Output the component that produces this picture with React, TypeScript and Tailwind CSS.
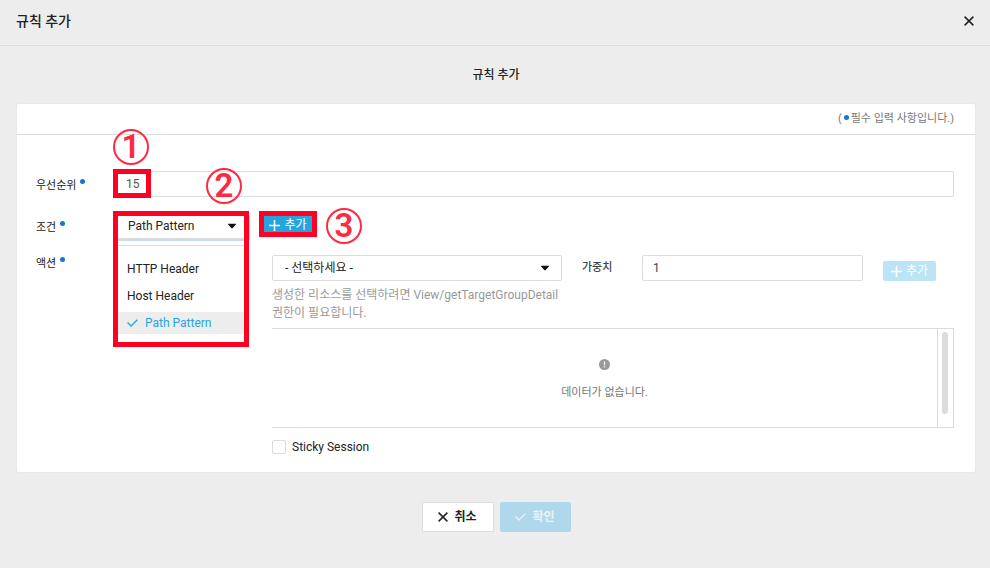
import { useState } from 'react'
import type { ReactNode } from 'react'
import clsx from 'clsx'

const conditions = ['HTTP Header', 'Host Header', 'Path Pattern']

const PlusIcon = () => (
  <svg className="size-[11px]" viewBox="0 0 11 11" fill="none" stroke="currentColor" strokeWidth="1.5" aria-hidden="true">
    <path d="M5.5 0V11M0 5.5H11" />
  </svg>
)

const CloseIcon = () => (
  <svg className="size-[10px]" viewBox="0 0 10 10" fill="none" stroke="currentColor" strokeWidth="1.5" aria-hidden="true">
    <path d="M0.6 0.6L9.4 9.4M9.4 0.6L0.6 9.4" />
  </svg>
)

const CheckIcon = () => (
  <svg className="w-[11px] h-2" viewBox="0 0 11 8" fill="none" stroke="currentColor" strokeWidth="1.4" aria-hidden="true">
    <path d="M0.6 3.6L4 7L10.4 0.7" />
  </svg>
)

const Caret = () => (
  <svg className="absolute right-[13px] top-1/2 -translate-y-1/2 w-2 h-[5px] pointer-events-none" viewBox="0 0 8 5" aria-hidden="true">
    <path d="M0.4 0H7.6Q8.2 0.3 7.8 0.9L4.5 4.7Q4 5.2 3.5 4.7L0.2 0.9Q-0.2 0.3 0.4 0Z" fill="#111" />
  </svg>
)

const Highlight = ({ className }: { className: string }) => (
  <span className={clsx('absolute z-20 border-5 border-[#ff0022] pointer-events-none', className)} />
)

const StepNumber = ({ className, children }: { className: string; children: ReactNode }) => (
  <span
    className={clsx(
      'absolute z-20 flex size-9 items-center justify-center rounded-full border-2 border-[#ff2a41] text-[33px] leading-8 font-semibold text-[#ff2a41]',
      className
    )}
  >
    {children}
  </span>
)

interface FieldLabelProps {
  htmlFor: string
  children: ReactNode
}

const FieldLabel = ({ htmlFor, children }: FieldLabelProps) => (
  <label htmlFor={htmlFor} className="flex w-[77px] shrink-0 gap-1 pt-[6px] text-[11px] leading-[18px]">
    {children}
    <span className="mt-[2px] size-[5px] rounded-full bg-[#1a73d1]" />
  </label>
)

const App = () => {
  const [priority, setPriority] = useState('15')
  const [condition, setCondition] = useState('Path Pattern')
  const [weight, setWeight] = useState('1')

  return (
    <div className="min-h-screen bg-[#ededed] font-[Roboto,'Noto_Sans_CJK_KR',sans-serif] text-xs text-[#222]">
      <header className="flex h-[46px] items-center justify-between border-b border-[#dcdcdc] px-4 pb-1">
        <h1 className="text-sm leading-5 font-medium">규칙 추가</h1>
        <button type="button" aria-label="닫기">
          <CloseIcon />
        </button>
      </header>

      <main className="pt-[21px] pr-[14px] pl-4">
        <h2 className="mb-[19px] text-center leading-[17px] font-medium">규칙 추가</h2>

        <section className="rounded-[3px] border border-[#e8e8e8] bg-white">
          <p className="flex h-[31px] items-center justify-end gap-[2px] border-b border-[#dcdcdc] pr-[21px] text-[11px] text-[#777]">
            (
            <span className="mb-1 size-[5px] rounded-full bg-[#1a73d1]" />
            필수 입력 사항입니다.)
          </p>

          <form className="pt-9 pr-[21px] pb-4 pl-[19px]">
            <div className="mb-4 flex">
              <FieldLabel htmlFor="priority">우선순위</FieldLabel>
              <div className="relative flex-1">
                <input
                  id="priority"
                  value={priority}
                  onChange={(e) => setPriority(e.target.value)}
                  className="block h-[26px] w-full rounded-xs border border-[#dcdcdc] px-3 text-[#555] outline-none"
                />
                <Highlight className="-top-0.5 left-0 h-[29px] w-[38px]" />
                <StepNumber className="bottom-8 left-0">1</StepNumber>
              </div>
            </div>

            <div className="mb-[10px] flex">
              <FieldLabel htmlFor="condition">조건</FieldLabel>
              <div className="relative h-[26px] w-[136px]">
                <select
                  id="condition"
                  value={condition}
                  onChange={(e) => setCondition(e.target.value)}
                  className="block h-full w-full appearance-none rounded-xs border border-[#dcdcdc] bg-white pl-[14px] shadow-[1px_2px_0_#c7dbf2] outline-none"
                >
                  {conditions.map((name) => (
                    <option key={name}>{name}</option>
                  ))}
                </select>
                <Caret />
                <ul role="listbox" aria-label="조건" className="absolute inset-x-0 top-8 z-10 flex flex-col gap-[5px] border border-[#dcdcdc] bg-white py-3">
                  {conditions.map((name) => (
                    <li
                      key={name}
                      role="option"
                      aria-selected={name === condition}
                      onClick={() => setCondition(name)}
                      className={clsx(
                        'flex h-[22px] cursor-pointer items-center gap-[7px] px-[13px]',
                        name === condition && 'bg-[#ededed] text-[#27a5df]'
                      )}
                    >
                      {name === condition && <CheckIcon />}
                      {name}
                    </li>
                  ))}
                </ul>
                <Highlight className="-top-0.5 left-0 h-[136px] w-[136px]" />
                <StepNumber className="bottom-[35px] left-[93px]">2</StepNumber>
              </div>
              <div className="relative ml-[10px] h-[26px] w-[58px] px-[3px] pt-[2px]">
                <button type="button" className="flex h-5 w-full items-center justify-center gap-1 bg-[#25a5e0] text-white">
                  <PlusIcon />
                  추가
                </button>
                <Highlight className="-top-0.5 left-0 h-[26px] w-[58px]" />
                <StepNumber className="-top-[5px] left-[67px]">3</StepNumber>
              </div>
            </div>

            <div className="flex">
              <FieldLabel htmlFor="target">액션</FieldLabel>
              <div className="ml-[159px] min-w-0 flex-1 pt-[6px]">
                <div className="flex items-end gap-5 pr-[18px]">
                  <div className="relative min-w-0 flex-[290]">
                    <select id="target" className="block h-[26px] w-full appearance-none rounded-xs border border-[#dcdcdc] bg-white pl-3 outline-none">
                      <option>- 선택하세요 -</option>
                    </select>
                    <Caret />
                  </div>
                  <label htmlFor="weight" className="w-10 text-[11px] leading-[26px] font-medium text-[#444]">
                    가중치
                  </label>
                  <div className="min-w-0 flex-[221]">
                    <input
                      id="weight"
                      value={weight}
                      onChange={(e) => setWeight(e.target.value)}
                      className="block h-[26px] w-full rounded-xs border border-[#dcdcdc] px-[10px] text-[#444] outline-none"
                    />
                  </div>
                  <button type="button" disabled className="flex h-5 w-[53px] items-center justify-center gap-1 rounded-xs bg-[#bce3f6] text-white">
                    <PlusIcon />
                    추가
                  </button>
                </div>

                <p className="mt-[5px] w-[290px] leading-[18px] text-[#999]">
                  생성한 리소스를 선택하려면 View/getTargetGroupDetail 권한이 필요합니다.
                </p>

                <div className="mt-[6px] flex h-[100px] border-y border-r border-[#dcdcdc]">
                  <div className="flex flex-1 flex-col items-center pt-[30px] text-[#777]">
                    <svg className="size-[11px]" viewBox="0 0 11 11" aria-hidden="true">
                      <circle cx="5.5" cy="5.5" r="5.5" fill="#999" />
                      <path d="M5.5 2.6V6.2M5.5 7.3V8.5" stroke="#fff" strokeWidth="1.2" />
                    </svg>
                    <p className="mt-[14px] text-[11px] leading-[18px]">데이터가 없습니다.</p>
                  </div>
                  <div className="w-4 border-l border-[#dcdcdc] pt-[3px] pl-1">
                    <div className="h-[82px] w-[6px] rounded-full bg-[#dcdcdc]" />
                  </div>
                </div>

                <label className="mt-[10px] flex items-center gap-[6px] leading-[18px]">
                  <input type="checkbox" className="size-[14px] appearance-none rounded-xs border border-[#dcdcdc] bg-white checked:bg-[#25a5e0]" />
                  Sticky Session
                </label>
              </div>
            </div>
          </form>
        </section>

        <div className="flex justify-center gap-[6px] py-[29px] text-xs font-bold">
          <button type="button" className="flex h-[30px] w-[72px] items-center justify-center gap-[6px] rounded-xs border border-[#dcdcdc] bg-white">
            <CloseIcon />
            취소
          </button>
          <button type="button" disabled className="flex h-[30px] w-[71px] items-center justify-center gap-[6px] rounded-xs bg-[#afd9ea] text-[#e6f2f7]">
            <CheckIcon />
            확인
          </button>
        </div>
      </main>
    </div>
  )
}

export default App
